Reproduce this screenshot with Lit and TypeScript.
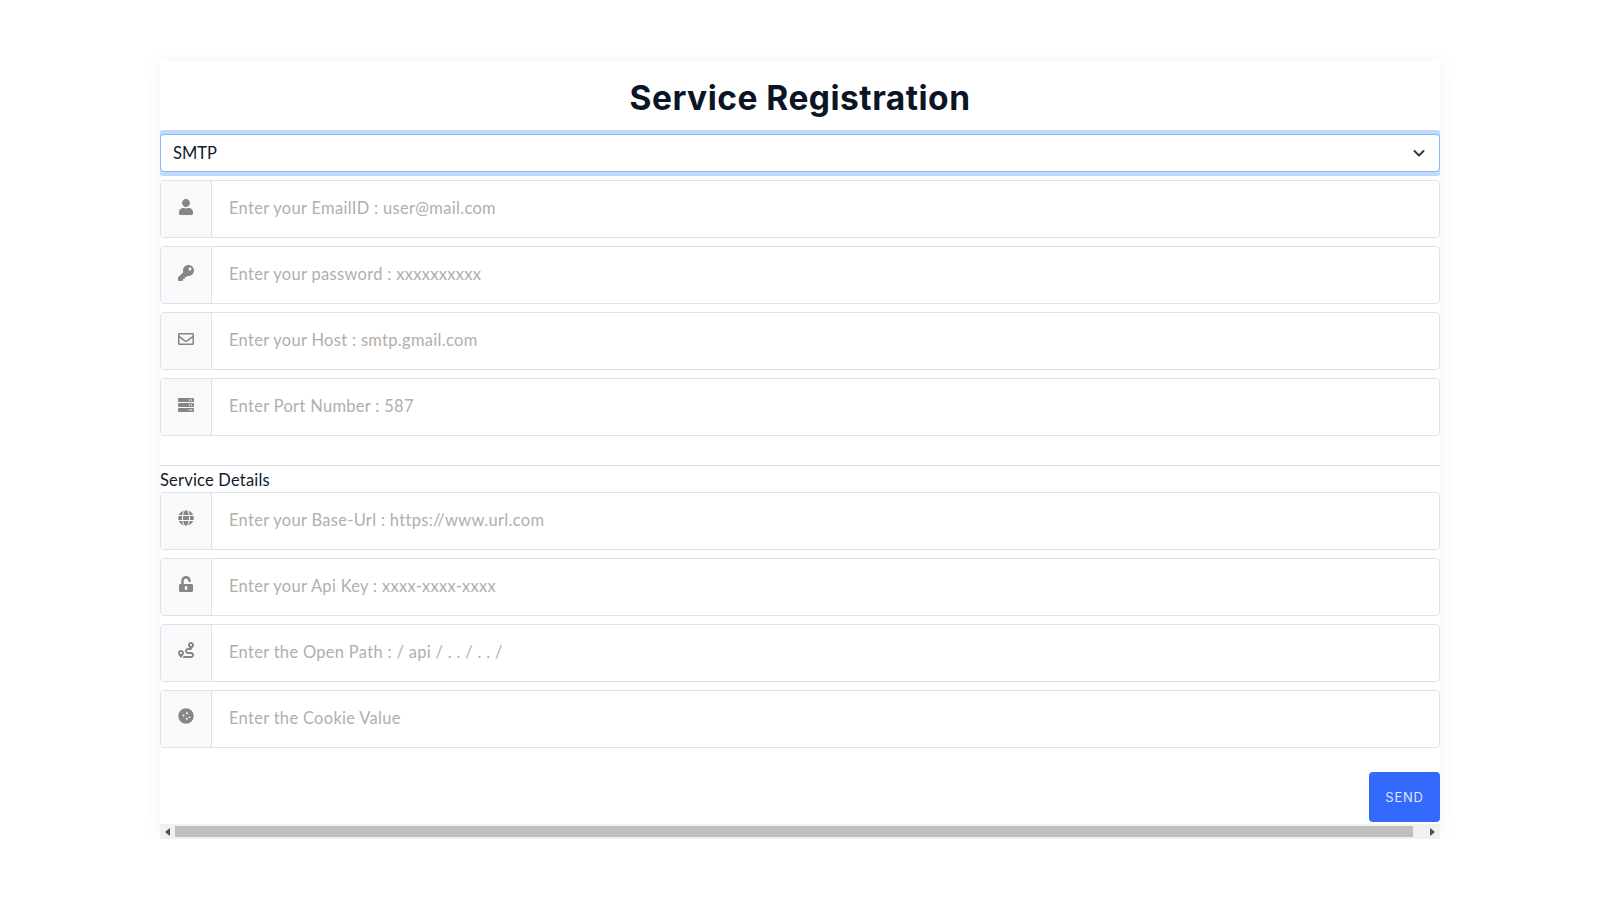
import { LitElement, html, css, svg } from "lit";
import { customElement } from "lit/decorators.js";

const ic = (vb: string, body: any) => html`<svg class="ic" viewBox=${vb} fill="currentColor" fill-rule="evenodd">${body}</svg>`;
const icons = {
  user: ic("0 0 448 512", svg`<path d="M224 256c70.7 0 128-57.3 128-128S294.7 0 224 0 96 57.3 96 128s57.3 128 128 128zm89.6 32h-16.7c-22.2 10.2-46.9 16-72.9 16s-50.6-5.8-72.9-16h-16.7C60.2 288 0 348.2 0 422.4V464c0 26.5 21.5 48 48 48h352c26.5 0 48-21.5 48-48v-41.6c0-74.2-60.2-134.4-134.4-134.4z"/>`),
  key: ic("0 0 512 512", svg`<path d="M512 176c0 97.2-78.8 176-176 176-11.2 0-22.2-1.1-32.8-3.1l-24 27A24 24 0 0 1 261.2 384H224v40c0 13.3-10.7 24-24 24h-40v40c0 13.3-10.7 24-24 24H24c-13.3 0-24-10.7-24-24v-78.1c0-6.4 2.5-12.5 7-17l161.8-161.8C163.1 213.8 160 195.3 160 176 160 78.8 238.8 0 336 0c97.5 0 176 78.5 176 176zM336 128c0 26.5 21.5 48 48 48s48-21.5 48-48-21.5-48-48-48-48 21.5-48 48z"/>`),
  mail: ic("0 0 512 512", svg`<path d="M464 64H48C21.49 64 0 85.49 0 112v288c0 26.51 21.49 48 48 48h416c26.51 0 48-21.49 48-48V112c0-26.51-21.49-48-48-48zm0 48v40.805c-22.422 18.259-58.168 46.651-134.587 106.49-16.841 13.247-50.201 45.072-73.413 44.701-23.208.375-56.579-31.459-73.413-44.701C106.18 199.465 70.425 171.067 48 152.805V112h416zM48 400V214.398c22.914 18.251 55.409 43.862 104.938 82.646 21.857 17.205 60.134 55.186 103.062 54.955 42.717.231 80.509-37.199 103.053-54.947 49.528-38.783 82.032-64.401 104.947-82.653V400H48z"/>`),
  server: ic("0 0 512 512", svg`<path d="M32 32h448a32 32 0 0 1 32 32v64a32 32 0 0 1-32 32H32a32 32 0 0 1-32-32V64a32 32 0 0 1 32-32zm400 40a24 24 0 1 0 0 48 24 24 0 0 0 0-48zm-64 0a24 24 0 1 0 0 48 24 24 0 0 0 0-48zM32 192h448a32 32 0 0 1 32 32v64a32 32 0 0 1-32 32H32a32 32 0 0 1-32-32v-64a32 32 0 0 1 32-32zm400 40a24 24 0 1 0 0 48 24 24 0 0 0 0-48zm-64 0a24 24 0 1 0 0 48 24 24 0 0 0 0-48zM32 352h448a32 32 0 0 1 32 32v64a32 32 0 0 1-32 32H32a32 32 0 0 1-32-32v-64a32 32 0 0 1 32-32zm400 40a24 24 0 1 0 0 48 24 24 0 0 0 0-48zm-64 0a24 24 0 1 0 0 48 24 24 0 0 0 0-48z"/>`),
  globe: ic("0 0 496 512", svg`<path d="M336.5 160C322 70.7 287.8 8 248 8s-74 62.7-88.5 152h177zM152 256c0 22.2 1.2 43.5 3.3 64h185.3c2.1-20.5 3.3-41.8 3.3-64s-1.2-43.5-3.3-64H155.3c-2.1 20.5-3.3 41.8-3.3 64zm324.7-96c-28.6-67.9-86.5-120.4-158-141.6 24.4 33.8 41.2 84.7 50 141.6h108zM177.2 18.4C105.8 39.6 47.8 92.1 19.3 160h108c8.7-56.9 25.5-107.8 49.9-141.6zM487.4 192H372.7c2.1 21 3.3 42.5 3.3 64s-1.2 43-3.3 64h114.6c5.5-20.5 8.6-41.8 8.6-64s-3.1-43.5-8.5-64zM120 256c0-21.5 1.2-43 3.3-64H8.6C3.2 212.5 0 233.8 0 256s3.2 43.5 8.6 64h114.6c-2-21-3.2-42.5-3.2-64zm39.5 96c14.5 89.3 48.7 152 88.5 152s74-62.7 88.5-152h-177zm159.3 141.6c71.4-21.2 129.4-73.7 158-141.6h-108c-8.8 56.9-25.6 107.8-50 141.6zM19.3 352c28.6 67.9 86.5 120.4 158 141.6-24.4-33.8-41.2-84.7-50-141.6h-108z"/>`),
  unlock: ic("0 0 448 512", svg`<path d="M400 256H152V152.9c0-39.6 31.7-72.5 71.3-72.9 40-.4 72.7 32.1 72.7 72v16c0 13.3 10.7 24 24 24h32c13.3 0 24-10.7 24-24v-16C376 68 307.5-.3 223.5 0 139.5.3 72 69.5 72 153.5V256H48c-26.5 0-48 21.5-48 48v160c0 26.5 21.5 48 48 48h352c26.5 0 48-21.5 48-48V304c0-26.5-21.5-48-48-48zM264 408c0 22.1-17.9 40-40 40s-40-17.9-40-40v-48c0-22.1 17.9-40 40-40s40 17.9 40 40v48z"/>`),
  route: ic("0 0 512 512", svg`<path d="M416 320h-96c-17.6 0-32-14.4-32-32s14.4-32 32-32h96s96-107 96-160-43-96-96-96-96 43-96 96c0 25.5 22.2 63.4 45.3 96H320c-52.9 0-96 43.1-96 96s43.1 96 96 96h96c17.6 0 32 14.4 32 32s-14.4 32-32 32H185.5c-16 24.8-33.8 47.7-47.3 64H416c52.9 0 96-43.1 96-96s-43.1-96-96-96zm0-256c17.7 0 32 14.3 32 32s-14.3 32-32 32-32-14.3-32-32 14.3-32 32-32zM96 256c-53 0-96 43-96 96s96 160 96 160 96-107 96-160-43-96-96-96zm0 128c-17.7 0-32-14.3-32-32s14.3-32 32-32 32 14.3 32 32-14.3 32-32 32z"/>`),
  cookie: ic("0 0 512 512", svg`<path d="M256 8a248 248 0 1 1 0 496 248 248 0 0 1 0-496zM176 208a32 32 0 1 0 0 64 32 32 0 0 0 0-64zm112-72a32 32 0 1 0 0 64 32 32 0 0 0 0-64zm-8 176a32 32 0 1 0 0 64 32 32 0 0 0 0-64zm88-48a28 28 0 1 0 0 56 28 28 0 0 0 0-56z"/>`),
};

const first = [
  ["user", "Enter your EmailID : user@mail.com"],
  ["key", "Enter your password : xxxxxxxxxx"],
  ["mail", "Enter your Host : smtp.gmail.com"],
  ["server", "Enter Port Number : 587"],
] as const;
const second = [
  ["globe", "Enter your Base-Url : https://www.url.com"],
  ["unlock", "Enter your Api Key : xxxx-xxxx-xxxx"],
  ["route", "Enter the Open Path : / api / . . / . . /"],
  ["cookie", "Enter the Cookie Value"],
] as const;

@customElement("app-root")
export class AppRoot extends LitElement {
  static styles = css`
    :host { display: block; font-family: "Lato", "Noto Sans", sans-serif; color: #0f1a2e; }
    .card { width: 1280px; margin: 61px auto 0; background: #fff; box-shadow: 0 0 18px rgba(0,0,0,.05); }
    .clip { overflow: hidden; }
    h1 { margin: 0; height: 69px; text-align: center; font: 700 33.5px/75px "Inter", sans-serif; letter-spacing: .5px; color: #0b1526; }
    .select { margin-top: 4px; height: 38px; box-sizing: border-box; border: 1px solid #86b7fe; border-radius: 4px; box-shadow: 0 0 0 4px #c2d9fe; display: flex; align-items: center; justify-content: space-between; padding: 0 12px 0 12px; font-size: 16.5px; background: #fff; position: relative; }
    .select svg { width: 16px; height: 16px; display: block; }
    .row { display: flex; height: 58px; box-sizing: border-box; margin-top: 8px; border: 1px solid #dee2e6; border-radius: 4px; overflow: hidden; background: #fff; }
    .addon { flex: none; width: 51px; box-sizing: border-box; background: #f8f9fa; border-right: 1px solid #dee2e6; display: flex; justify-content: center; padding-top: 18px; color: #868686; }
    .up .addon { padding-top: 17px; }
    .ic { width: 16px; height: 16px; display: block; }
    input { flex: 1; min-width: 0; border: 0; outline: 0; padding: 0 17px 3px; font: 400 16.5px "Lato", sans-serif; letter-spacing: .3px; background: transparent; }
    input::placeholder { color: #b3aeaa; opacity: 1; }
    hr { margin: 29px 0 0; border: 0; border-top: 1px solid #d8dbe0; }
    .label { height: 26px; line-height: 28px; font-size: 16.5px; letter-spacing: .2px; margin-bottom: -8px; }
    .actions { display: flex; justify-content: flex-end; margin-top: 24px; padding-bottom: 2px; }
    button { width: 71px; height: 50px; border: 0; border-radius: 4px; background: #3369fd; color: #dfe7ff; font: 400 13px "Inter", sans-serif; letter-spacing: .8px; }
    .bar { height: 15px; background: #f1f1f1; display: flex; align-items: center; }
    .arrow { flex: none; width: 15px; display: flex; justify-content: center; color: #505050; }
    .arrow svg { width: 5px; height: 8px; display: block; }
    .track { flex: 1; height: 11px; }
    .thumb { height: 100%; background: #bfbfbf; margin-right: 12px; }
  `;

  rowT(r: readonly [string, string], cls = "") {
    return html`<div class="row ${cls}"><div class="addon">${(icons as any)[r[0]]}</div><input placeholder=${r[1]} /></div>`;
  }

  render() {
    return html`
      <div class="card">
        <div class="clip">
          <h1>Service Registration</h1>
          <div class="select"><span>SMTP</span>
            <svg viewBox="0 0 16 16" fill="none" stroke="#343a40" stroke-width="2" stroke-linecap="round" stroke-linejoin="round"><path d="m3.500 6 4.500 4.500L12.500 6"/></svg>
          </div>
          ${first.map((r) => this.rowT(r))}
          <hr />
          <div class="label">Service Details</div>
          ${second.map((r) => this.rowT(r, "up"))}
          <div class="actions"><button>SEND</button></div>
          <div class="bar">
            <div class="arrow"><svg viewBox="0 0 5 8" fill="currentColor"><path d="M5 0v8L0 4z"/></svg></div>
            <div class="track"><div class="thumb"></div></div>
            <div class="arrow"><svg viewBox="0 0 5 8" fill="currentColor"><path d="M0 0v8l5-4z"/></svg></div>
          </div>
        </div>
      </div>
    `;
  }
}
